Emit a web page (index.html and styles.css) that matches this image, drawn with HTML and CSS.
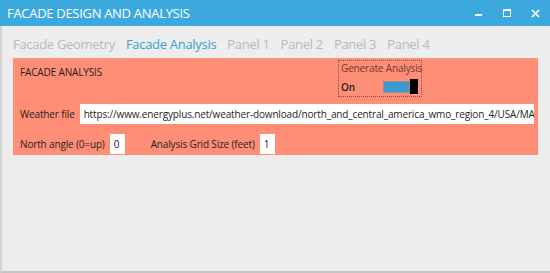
FILE: index.html
```html
<!DOCTYPE html>
<html lang="en">
<head>
    <meta charset="UTF-8">
    <title>Facade Design and Analysis</title>
    <link rel="stylesheet" href="styles.css">
</head>
<body>

<div class="window">
    <header class="titlebar">
        <h1>FACADE DESIGN AND ANALYSIS</h1>
        <div class="controls">
            <span class="ctl min"></span>
            <span class="ctl max"></span>
            <svg class="ctl close" width="9" height="9" viewBox="0 0 9 9">
                <path d="M1 1 L8 8 M8 1 L1 8" stroke="white" stroke-width="1.6"/>
            </svg>
        </div>
    </header>

    <nav class="tabs">
        <span>Facade Geometry</span>
        <span class="active">Facade Analysis</span>
        <span>Panel 1</span>
        <span>Panel 2</span>
        <span>Panel 3</span>
        <span>Panel 4</span>
    </nav>

    <div class="panel">
        <div class="panel-head">
            <h2>FACADE ANALYSIS</h2>
            <div class="gen-box">
                <div class="gen-title">Generate Analysis</div>
                <div class="gen-row">
                    <span class="on">On</span>
                    <span class="toggle"><span class="track"></span><span class="thumb"></span></span>
                </div>
            </div>
        </div>

        <div class="row">
            <label>Weather file</label>
            <div class="field wide">https://www.energyplus.net/weather-download/north_and_central_america_wmo_region_4/USA/MA/USA_MA_Boston-Logan.Intl.AP.725090_TMY3/USA_MA_Boston-Logan.Intl.AP.725090_TMY3.epw</div>
        </div>

        <div class="row">
            <label>North angle (0=up)</label>
            <div class="field small">0</div>
            <label class="gap">Analysis Grid Size (feet)</label>
            <div class="field small">1</div>
        </div>
    </div>
</div>

</body>
</html>
```

FILE: styles.css
```css
body {
    font-family: "Open Sans", "Noto Sans", sans-serif;
    margin: 0;
    padding: 0;
    background-color: #ededed;
    color: #222;
}
.window {
    height: 271px;
    border-left: 2px solid #d2d2d2;
    border-bottom: 2px solid #c4c4c4;
}
.titlebar {
    background: #3ba9dd;
    height: 26px;
    display: flex;
    align-items: center;
    justify-content: space-between;
    margin-left: -2px;
}
.titlebar h1 {
    margin: 0 0 0 7px;
    font-size: 13px;
    font-weight: normal;
    color: white;
    letter-spacing: -0.3px;
}
.controls {
    display: flex;
    align-items: center;
    margin-right: 10px;
}
.ctl {
    display: block;
}
.min {
    width: 7px;
    height: 2px;
    background: white;
    margin-top: 4px;
    margin-right: 21px;
}
.max {
    width: 6px;
    height: 5px;
    border: 1.5px solid white;
    border-top-width: 2.5px;
    margin-right: 20px;
}
.tabs {
    display: flex;
    gap: 11px;
    padding: 9px 11px 0;
    height: 23px;
    font-size: 13px;
    color: #b9b9b9;
    letter-spacing: -0.3px;
}
.tabs .active {
    color: #3a9fd2;
}
.panel {
    background: #ff8e76;
    margin: 0 11px;
    width: 525px;
    height: 97px;
    box-sizing: border-box;
    padding: 2px 4px 0 7px;
    font-size: 10px;
    letter-spacing: -0.15px;
    color: #1e1e1e;
}
.panel-head {
    display: flex;
    align-items: flex-start;
    height: 44px;
}
.panel-head h2 {
    margin: 5px 0 0;
    font-size: 10px;
    font-weight: normal;
    white-space: nowrap;
}
.gen-box {
    margin-left: 236px;
    width: 84px;
    height: 37px;
    border: 1px dotted #8a4a3e;
    box-sizing: border-box;
    padding: 0 2px;
    white-space: nowrap;
}
.gen-title {
    color: #6e3a30;
    line-height: 15px;
}
.gen-row {
    display: flex;
    align-items: center;
    justify-content: space-between;
    font-weight: 600;
    margin-top: 3px;
}
.toggle {
    display: flex;
    align-items: center;
    margin-right: 1px;
}
.track {
    width: 25px;
    height: 10px;
    background: #3b9bd0;
    border: 1px solid #8f8f8f;
}
.thumb {
    width: 8px;
    height: 15px;
    background: #000;
}
.row {
    display: flex;
    align-items: center;
    gap: 5px;
    height: 20px;
    margin-bottom: 10px;
}
.row label {
    white-space: nowrap;
}
.row .gap {
    margin-left: 21px;
}
.field {
    background: white;
    height: 20px;
    line-height: 20px;
    padding: 0 4px;
    box-sizing: border-box;
    white-space: nowrap;
    overflow: hidden;
}
.wide {
    flex: 1;
}
.small {
    width: 15px;
}
```
